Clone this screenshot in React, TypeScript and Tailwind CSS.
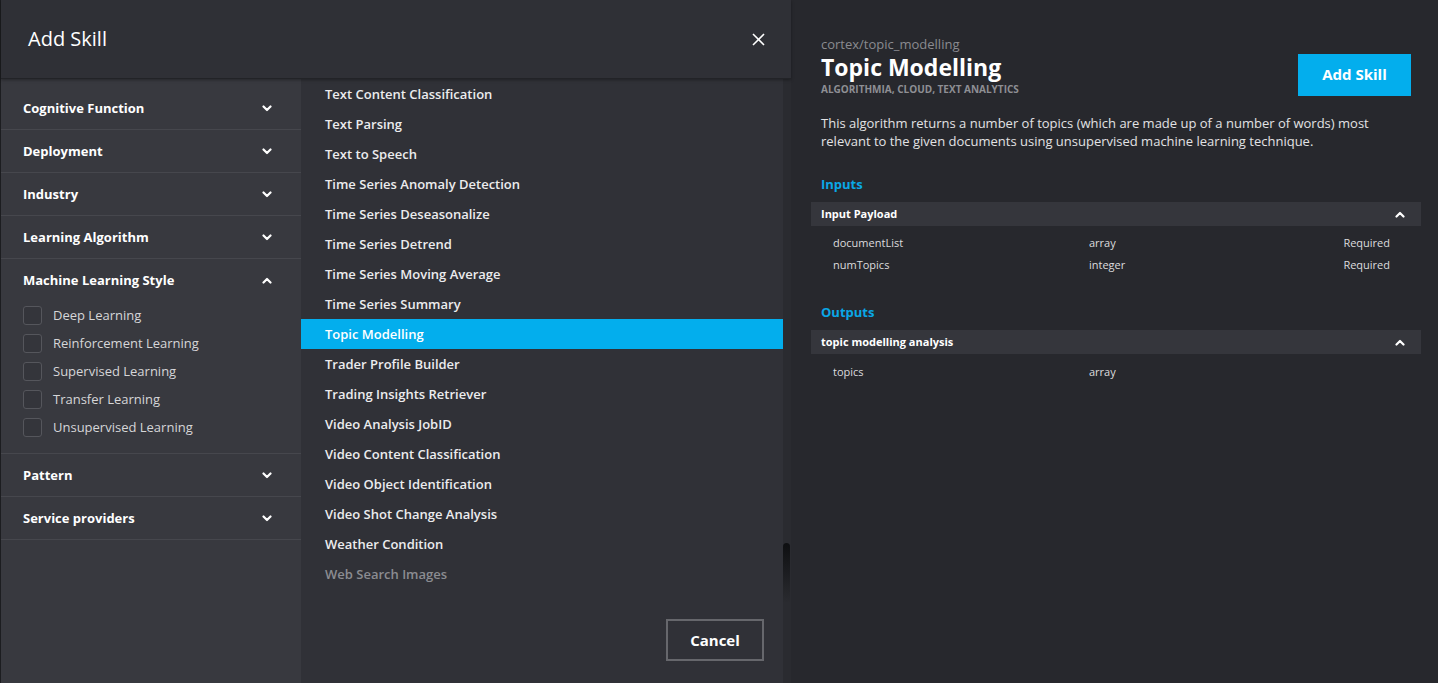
import React from "react";

const font = { fontFamily: '"Open Sans", "Noto Sans", sans-serif' };

function Chevron({ up = false }: { up?: boolean }) {
  return (
    <svg width="10" height="7" viewBox="0 0 10 7" className="shrink-0">
      <polyline
        points={up ? "1.5,5.5 5,2 8.5,5.5" : "1.5,1.5 5,5 8.5,1.5"}
        fill="none"
        stroke="#ffffff"
        strokeWidth="2.2"
        strokeLinecap="round"
        strokeLinejoin="round"
      />
    </svg>
  );
}

const filters = [
  "Cognitive Function",
  "Deployment",
  "Industry",
  "Learning Algorithm",
];

const mlStyles = [
  "Deep Learning",
  "Reinforcement Learning",
  "Supervised Learning",
  "Transfer Learning",
  "Unsupervised Learning",
];

const skills = [
  "Text Content Classification",
  "Text Parsing",
  "Text to Speech",
  "Time Series Anomaly Detection",
  "Time Series Deseasonalize",
  "Time Series Detrend",
  "Time Series Moving Average",
  "Time Series Summary",
  "Topic Modelling",
  "Trader Profile Builder",
  "Trading Insights Retriever",
  "Video Analysis JobID",
  "Video Content Classification",
  "Video Object Identification",
  "Video Shot Change Analysis",
  "Weather Condition",
  "Web Search Images",
];

function FilterHeader({ label, up = false }: { label: string; up?: boolean }) {
  return (
    <div className="h-[42px] flex items-center justify-between pl-[22px] pr-[29px]">
      <span className="text-[13px] font-bold text-white pt-[1px]">{label}</span>
      <Chevron up={up} />
    </div>
  );
}

export default function App() {
  return (
    <div className="w-[1438px] h-[683px] flex overflow-hidden bg-[#27282d]" style={font}>
      {/* Left modal */}
      <div className="w-[791px] h-full flex flex-col border-l border-[#1c1d20]">
        <div className="h-[79px] shrink-0 flex items-center justify-between pl-[27px] pr-[26px] bg-[#2f3036] border-b border-[#222327] shadow-[0_1px_3px_rgba(0,0,0,0.35)] relative z-10">
          <span className="text-[20px] text-white leading-none">Add Skill</span>
          <svg width="13" height="13" viewBox="0 0 13 13">
            <line x1="1" y1="1" x2="12" y2="12" stroke="#fff" strokeWidth="1.6" />
            <line x1="12" y1="1" x2="1" y2="12" stroke="#fff" strokeWidth="1.6" />
          </svg>
        </div>
        <div className="flex-1 flex min-h-0">
          {/* Sidebar */}
          <div className="w-[300px] shrink-0 bg-[#38393f] pt-[8px] flex flex-col">
            {filters.map((f) => (
              <div key={f} className="border-b border-[#46474d]">
                <FilterHeader label={f} />
              </div>
            ))}
            <div className="border-b border-[#46474d] pb-[12px]">
              <FilterHeader label="Machine Learning Style" up />
              {mlStyles.map((s) => (
                <div key={s} className="h-[28px] flex items-center pl-[22px]">
                  <div className="w-[19px] h-[19px] rounded-[3px] border border-[#55565c] bg-[#34353b]" />
                  <span className="ml-[11px] text-[13px] text-[#d6d6d8] pt-[1px]">{s}</span>
                </div>
              ))}
            </div>
            <div className="border-b border-[#46474d]">
              <FilterHeader label="Pattern" />
            </div>
            <div className="border-b border-[#46474d]">
              <FilterHeader label="Service providers" />
            </div>
          </div>
          {/* Skill list */}
          <div className="flex-1 flex bg-[#303137]">
            <div className="flex-1 flex flex-col">
              <div className="flex flex-col">
                {skills.map((s, i) => (
                  <div
                    key={s}
                    className={
                      "h-[30px] flex items-center pl-[24px] pt-[1px] text-[13px] font-semibold " +
                      (s === "Topic Modelling"
                        ? "bg-[#03aeed] text-white"
                        : i === skills.length - 1
                        ? "text-[#8b8c91]"
                        : "text-[#ececee]")
                    }
                  >
                    {s}
                  </div>
                ))}
              </div>
              <div className="flex-1" />
              <div className="flex justify-end pr-[19px] pb-[22px]">
                <button className="w-[98px] h-[42px] border-2 border-[#66676c] text-white text-[15px] font-bold">
                  Cancel
                </button>
              </div>
            </div>
            <div className="w-[8px] bg-[#2a2b30] flex flex-col">
              <div className="h-[464px]" />
              <div className="w-[7px] h-[60px] rounded-t-full bg-gradient-to-b from-[#0e0f11] to-transparent" />
            </div>
          </div>
        </div>
      </div>

      {/* Right detail panel */}
      <div className="flex-1 h-full flex flex-col bg-[#27282d]">
        <div className="flex justify-between pl-[30px] pr-[27px]">
          <div className="flex flex-col pt-[35px]">
            <span className="text-[13px] leading-[18px] text-[#8a8b90]">cortex/topic_modelling</span>
            <span className="text-[23px] leading-[28px] font-bold text-white">Topic Modelling</span>
            <span className="text-[10px] leading-[13px] font-bold text-[#8e8f94] mt-[2px]">
              ALGORITHMIA, CLOUD, TEXT ANALYTICS
            </span>
          </div>
          <button className="mt-[54px] w-[113px] h-[42px] bg-[#03aeed] text-white text-[15px] font-bold pb-[1px]">
            Add Skill
          </button>
        </div>
        <p className="pl-[30px] pr-[60px] mt-[18px] text-[13px] leading-[18px] text-[#e2e2e4]">
          This algorithm returns a number of topics (which are made up of a number of words) most
          <br />
          relevant to the given documents using unsupervised machine learning technique.
        </p>
        <div className="pl-[30px] mt-[25px] text-[13px] leading-[18px] font-bold text-[#0aa7e6]">Inputs</div>
        <div className="ml-[20px] mr-[17px] mt-[9px] h-[24px] bg-[#35363c] flex items-center justify-between pl-[10px] pr-[16px]">
          <span className="text-[11px] font-bold text-white">Input Payload</span>
          <Chevron up />
        </div>
        <div className="mt-[6px] flex flex-col">
          {[
            ["documentList", "array", "Required"],
            ["numTopics", "integer", "Required"],
          ].map(([a, b, c]) => (
            <div key={a} className="h-[22px] flex items-center text-[11px] text-[#dcdcde]">
              <span className="pl-[42px] w-[298px]">{a}</span>
              <span className="flex-1">{b}</span>
              <span className="pr-[48px]">{c}</span>
            </div>
          ))}
        </div>
        <div className="pl-[30px] mt-[27px] text-[13px] leading-[18px] font-bold text-[#0aa7e6]">Outputs</div>
        <div className="ml-[20px] mr-[17px] mt-[9px] h-[24px] bg-[#35363c] flex items-center justify-between pl-[10px] pr-[16px]">
          <span className="text-[11px] font-bold text-white">topic modelling analysis</span>
          <Chevron up />
        </div>
        <div className="mt-[7px] h-[22px] flex items-center text-[11px] text-[#dcdcde]">
          <span className="pl-[42px] w-[298px]">topics</span>
          <span className="flex-1">array</span>
        </div>
      </div>
    </div>
  );
}
